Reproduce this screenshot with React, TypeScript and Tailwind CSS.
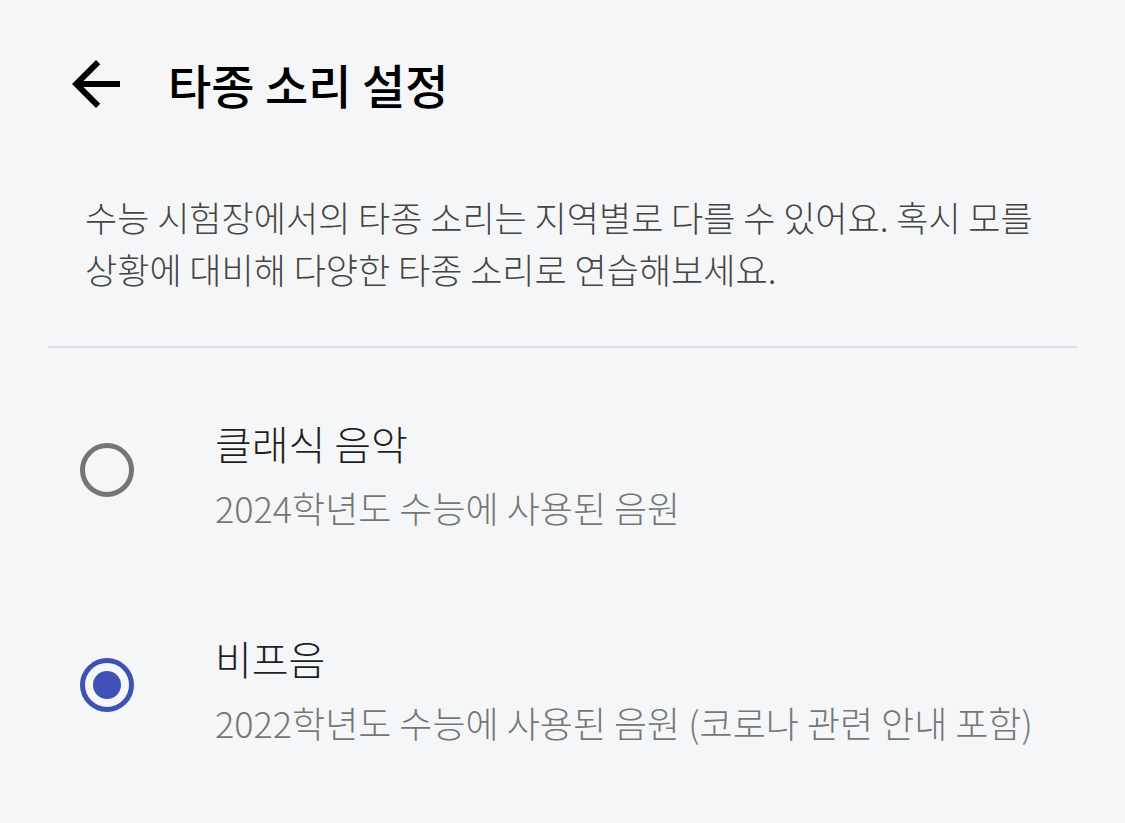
import React, { useState } from 'react'

const FONT = "font-['Noto_Sans_CJK_KR','Noto_Sans',sans-serif]"

const OPTIONS = [
  { id: 'classic', title: '클래식 음악', desc: '2024학년도 수능에 사용된 음원' },
  { id: 'beep', title: '비프음', desc: '2022학년도 수능에 사용된 음원 (코로나 관련 안내 포함)' },
]

function Radio({ checked }: { checked: boolean }) {
  return (
    <span
      className={
        checked
          ? 'flex h-[54px] w-[54px] items-center justify-center rounded-full border-[5px] border-[#3f51b5]'
          : 'flex h-[54px] w-[54px] items-center justify-center rounded-full border-[5px] border-[#757575]'
      }
    >
      {checked && <span className="h-[28px] w-[28px] rounded-full bg-[#3f51b5]" />}
    </span>
  )
}

export default function App() {
  const [selected, setSelected] = useState('beep')

  return (
    <div className={`${FONT} min-h-[823px] w-[1125px] bg-[#f5f6f8] text-black`}>
      {/* Top bar */}
      <header className="flex h-[168px] items-center">
        <button className="ml-[60px] flex h-[72px] w-[72px] items-center justify-center">
          <svg width="72" height="72" viewBox="0 0 24 24">
            <path d="M20 11H7.83l5.59-5.59L12 4l-8 8 8 8 1.41-1.41L7.83 13H20v-2z" fill="#000" />
          </svg>
        </button>
        <h1 className="ml-[36px] text-[47px] font-medium leading-[68px]">타종 소리 설정</h1>
      </header>

      <p className="pl-[85px] pr-[70px] pt-[23px] text-[35px] font-light leading-[52px] text-[#454545]">
        수능 시험장에서의 타종 소리는 지역별로 다를 수 있어요. 혹시 모를 상황에 대비해 다양한 타종 소리로 연습해보세요.
      </p>

      <div className="mx-[48px] mt-[51px] h-[2px] bg-[#dddee1]" />

      {OPTIONS.map((o) => (
        <button
          key={o.id}
          onClick={() => setSelected(o.id)}
          className="flex h-[215px] w-full items-start pt-[69px] text-left"
        >
          <span className="ml-[80px] mt-[26px] w-[135px] shrink-0">
            <Radio checked={selected === o.id} />
          </span>
          <span className="flex flex-col">
            <span className="text-[40px] font-light leading-[52px] text-[#1f1f1f]">{o.title}</span>
            <span className="mt-[12px] text-[36px] font-light leading-[52px] text-[#767676]">{o.desc}</span>
          </span>
        </button>
      ))}
    </div>
  )
}
